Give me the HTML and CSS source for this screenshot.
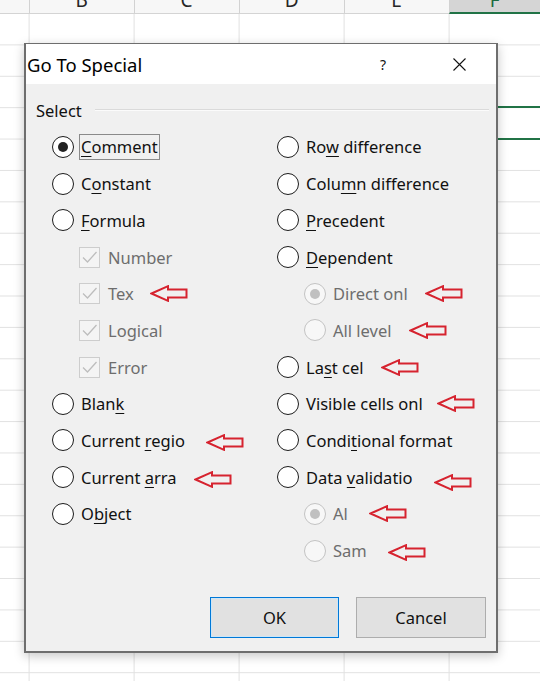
FILE: index.html
```html
<!DOCTYPE html>
<html lang="en">
<head>
  <meta charset="UTF-8" />
  <meta name="viewport" content="width=device-width, initial-scale=1" />
  <title>Go To Special</title>
  <link rel="stylesheet" href="styles.css">
</head>
<body>

  <!-- Worksheet behind the dialog -->
  <div class="sheet">
    <div class="col-heads">
      <div class="col-head col-a"></div>
      <div class="col-head"><span>B</span></div>
      <div class="col-head"><span>C</span></div>
      <div class="col-head"><span>D</span></div>
      <div class="col-head"><span>E</span></div>
      <div class="col-head active"><span>F</span></div>
    </div>
    <div class="cells">
      <div class="sel-cell"></div>
    </div>
  </div>

  <!-- Go To Special dialog -->
  <div class="dialog">
    <div class="titlebar">
      <div class="title">Go To Special</div>
      <div class="tbtn help">?</div>
      <div class="tbtn">
        <svg width="13" height="13" viewBox="0 0 13 13"><path d="M0.5 0.5 L12.5 12.5 M12.5 0.5 L0.5 12.5" stroke="#111" stroke-width="1.1" fill="none"/></svg>
      </div>
    </div>

    <div class="dlg-body">
      <div class="group-head">
        <span>Select</span>
        <div class="group-line"></div>
      </div>

      <div class="options">
        <!-- left column -->
        <div class="col">
          <div class="opt"><span class="radio checked"></span><span class="label focus"><u>C</u>omment</span></div>
          <div class="opt"><span class="radio"></span><span class="label">C<u>o</u>nstant</span></div>
          <div class="opt"><span class="radio"></span><span class="label"><u>F</u>ormula</span></div>
          <div class="opt sub off"><span class="check"></span><span class="label">Number</span></div>
          <div class="opt sub off"><span class="check"></span><span class="label">Tex</span><span class="arrow a-tex"></span></div>
          <div class="opt sub off"><span class="check"></span><span class="label">Logical</span></div>
          <div class="opt sub off"><span class="check"></span><span class="label">Error</span></div>
          <div class="opt"><span class="radio"></span><span class="label">Blan<u>k</u></span></div>
          <div class="opt"><span class="radio"></span><span class="label">Current <u>r</u>egio</span><span class="arrow a-low a-wide"></span></div>
          <div class="opt"><span class="radio"></span><span class="label">Current <u>a</u>rra</span><span class="arrow a-low"></span></div>
          <div class="opt"><span class="radio"></span><span class="label">O<u>b</u>ject</span></div>
        </div>

        <!-- right column -->
        <div class="col">
          <div class="opt"><span class="radio"></span><span class="label">Ro<u>w</u> difference</span></div>
          <div class="opt"><span class="radio"></span><span class="label">Colu<u>m</u>n difference</span></div>
          <div class="opt"><span class="radio"></span><span class="label"><u>P</u>recedent</span></div>
          <div class="opt"><span class="radio"></span><span class="label"><u>D</u>ependent</span></div>
          <div class="opt sub off"><span class="radio checked"></span><span class="label">Direct onl</span><span class="arrow"></span></div>
          <div class="opt sub off"><span class="radio"></span><span class="label">All level</span><span class="arrow"></span></div>
          <div class="opt"><span class="radio"></span><span class="label">La<u>s</u>t cel</span><span class="arrow"></span></div>
          <div class="opt"><span class="radio"></span><span class="label">Visible cells onl</span><span class="arrow a-tight"></span></div>
          <div class="opt"><span class="radio"></span><span class="label">Condi<u>t</u>ional format</span></div>
          <div class="opt"><span class="radio"></span><span class="label">Data <u>v</u>alidatio</span><span class="arrow a-lower a-wide"></span></div>
          <div class="opt sub off"><span class="radio checked"></span><span class="label">Al</span><span class="arrow a-wide"></span></div>
          <div class="opt sub off"><span class="radio"></span><span class="label">Sam</span><span class="arrow a-low a-wide"></span></div>
        </div>
      </div>

      <div class="buttons">
        <button class="btn default">OK</button>
        <button class="btn">Cancel</button>
      </div>
    </div>
  </div>

</body>
</html>
```

FILE: styles.css
```css
/* Reset & Body */
* {
  box-sizing: border-box;
}

body {
  margin: 0;
  height: 100vh;
  overflow: hidden;
  background: #fff;
  font-family: 'Noto Sans', 'Open Sans', sans-serif;
  color: #111;
}

/* Worksheet */
.sheet {
  height: 100vh;
  display: flex;
  flex-direction: column;
  overflow: hidden;
}

.col-heads {
  height: 14px;
  flex-shrink: 0;
  display: flex;
  overflow: hidden;
  background: #f7f7f7;
}

.col-head {
  width: 105px;
  height: 14px;
  border-left: 1px solid #d2d2d2;
  border-bottom: 1px solid #d4d4d4;
  overflow: hidden;
  color: #262626;
}

.col-head span {
  display: block;
  text-align: center;
  font-size: 19px;
  line-height: 19px;
  transform: translateY(-9px);
}

.col-head.col-a {
  width: 28.6px;
  border-left: none;
}

.col-head.active {
  flex: 1;
  background: #d5d5d5;
  border-bottom: 2px solid #217346;
  color: #1d6b40;
}

.cells {
  flex: 1;
  display: grid;
  grid-template-columns: 28.6px repeat(4, 105px) 1fr;
  grid-template-rows: 30.4px repeat(20, 31.4px);
  background-image:
    linear-gradient(to right, #e1e1e1 1px, transparent 1px),
    linear-gradient(to bottom, #e1e1e1 1px, transparent 1px);
  background-size: 105px 100%, 100% 31.4px;
  background-position: 28.6px 0, 0 30.4px;
}

.sel-cell {
  grid-column: 6;
  grid-row: 4;
  margin: -1px 0;
  border-top: 2px solid #217346;
  border-bottom: 2px solid #217346;
}

/* Dialog */
.dialog {
  position: absolute;
  left: 24px;
  top: 43px;
  width: 474px;
  height: 610px;
  background: #f0f0f0;
  border: 2px solid #6e6e6e;
  border-top-width: 1px;
  box-shadow: 0 3px 10px rgba(0,0,0,0.22);
  display: flex;
  flex-direction: column;
}

.titlebar {
  height: 40px;
  background: #fff;
  display: flex;
  align-items: center;
  padding: 0 14px 0 1px;
}

.title {
  flex: 1;
  font-size: 18.5px;
  color: #000;
}

.tbtn {
  width: 46px;
  display: flex;
  justify-content: center;
  align-items: center;
}

.tbtn.help {
  margin-right: 30px;
  font-size: 14px;
}

.dlg-body {
  flex: 1;
  padding: 15px 7px 0 10px;
  font-size: 16.5px;
}

.group-head {
  height: 22px;
  display: flex;
  align-items: center;
  gap: 13px;
}

.group-line {
  flex: 1;
  height: 2px;
  border-top: 1px solid #dadada;
  border-bottom: 1px solid #fbfbfb;
}

.options {
  margin-top: 7.65px;
  padding-left: 16px;
  display: grid;
  grid-template-columns: 225px 1fr;
}

.opt {
  height: 36.7px;
  display: flex;
  align-items: center;
}

.opt.sub {
  padding-left: 27px;
}

.label {
  white-space: nowrap;
}

.label u {
  text-decoration-thickness: 1px;
  text-underline-offset: 3px;
}

.label.focus {
  line-height: 24px;
  padding: 0 1px;
  margin-left: -1px;
  outline: 1px solid #8a8a8a;
}

.off .label {
  color: #6d6d6d;
}

/* Radio buttons */
.radio {
  width: 22px;
  height: 22px;
  margin-right: 7px;
  border: 1.6px solid #1c1c1c;
  border-radius: 50%;
  background: #fff;
  display: flex;
  justify-content: center;
  align-items: center;
  flex-shrink: 0;
}

.radio.checked::after {
  content: '';
  width: 10px;
  height: 10px;
  border-radius: 50%;
  background: #222;
}

.off .radio {
  border-color: #c3c3c3;
  background: #f7f7f7;
}

.off .radio.checked::after {
  background: #c0c0c0;
}

/* Disabled checkboxes */
.check {
  width: 21px;
  height: 21px;
  margin-right: 8px;
  border: 1px solid #cdcdcd;
  background: #f4f4f4 url("data:image/svg+xml,%3Csvg xmlns='http://www.w3.org/2000/svg' viewBox='0 0 19 19'%3E%3Cpath d='M3 9.5 L7.5 14 L16.5 4' fill='none' stroke='%23bdbdbd' stroke-width='1.3'/%3E%3C/svg%3E") no-repeat center / 19px 19px;
  flex-shrink: 0;
}

/* Red annotation arrows */
.arrow {
  width: 38px;
  height: 17px;
  margin-left: 17px;
  background: url("data:image/svg+xml,%3Csvg xmlns='http://www.w3.org/2000/svg' viewBox='0 0 38 17'%3E%3Cpath d='M1.5 8.5 L18 1.2 V4.5 H36.5 V12.5 H18 V15.8 Z' fill='none' stroke='%23d6232f' stroke-width='2'/%3E%3C/svg%3E") no-repeat;
}

.arrow.a-tex {
  margin-left: 16px;
}

.arrow.a-tight {
  margin-left: 14px;
}

.arrow.a-wide {
  margin-left: 21px;
}

.arrow.a-low {
  margin-top: 4px;
}

.arrow.a-lower {
  margin-top: 10px;
}

/* Buttons */
.buttons {
  margin-top: 28px;
  padding-right: 3px;
  display: flex;
  justify-content: flex-end;
  gap: 17px;
}

.btn {
  width: 130px;
  height: 41px;
  background: #e1e1e1;
  border: 1px solid #adadad;
  font-family: inherit;
  font-size: 16.5px;
  color: #111;
  padding: 0;
}

.btn.default {
  width: 129px;
  border-color: #0078d7;
  box-shadow: inset 0 0 0 1px #cde6f7;
}
```
